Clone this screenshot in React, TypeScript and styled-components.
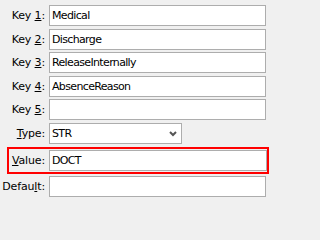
import React from "react";
import styled, { createGlobalStyle } from "styled-components";

const Global = createGlobalStyle`
  html, body { margin: 0; padding: 0; background: #f0f0f0; }
  body { font-family: Tahoma, "DejaVu Sans", sans-serif; font-size: 11px; color: #000; }
  * { box-sizing: border-box; }
`;

const Form = styled.div`
  width: 271px;
  height: 202px;
  padding: 5px 5px 0 0;
  display: flex;
  flex-direction: column;
  gap: 2.5px;
  font-family: Tahoma, "DejaVu Sans", sans-serif;
  font-size: 11px;
  letter-spacing: -0.65px;
`;

const Row = styled.div`
  display: grid;
  grid-template-columns: 45px 1fr;
  column-gap: 4px;
  align-items: center;
`;

const HighlightRow = styled(Row)`
  grid-template-columns: 36px 1fr;
  margin: 0.5px -3px 0 7px;
  border: 2px solid #ff0000;
  padding: 1px 0;
`;

const Label = styled.label`
  text-align: right;
  white-space: nowrap;
  color: #000;
  letter-spacing: -0.15px;
`;

const Key = styled.span`
  text-decoration: underline;
  text-underline-offset: 1px;
`;

const Field = styled.div<{ $width?: number }>`
  height: 21px;
  width: ${(p) => (p.$width ? `${p.$width}px` : "100%")};
  background: #fff;
  border: 1px solid #adadad;
  padding: 0 2px;
  display: flex;
  align-items: center;
  position: relative;
  white-space: nowrap;
  overflow: hidden;
`;

const Chevron = styled.svg`
  position: absolute;
  right: 4px;
  top: 7px;
`;

const label = (before: string, key: string, after: string) => (
  <>
    {before}
    <Key>{key}</Key>
    {after}
  </>
);

export default function App() {
  return (
    <>
      <Global />
      <Form>
        <Row>
          <Label>{label("Key ", "1", ":")}</Label>
          <Field>Medical</Field>
        </Row>
        <Row>
          <Label>{label("Key ", "2", ":")}</Label>
          <Field>Discharge</Field>
        </Row>
        <Row>
          <Label>{label("Key ", "3", ":")}</Label>
          <Field>ReleaseInternally</Field>
        </Row>
        <Row>
          <Label>{label("Key ", "4", ":")}</Label>
          <Field>AbsenceReason</Field>
        </Row>
        <Row>
          <Label>{label("Key ", "5", ":")}</Label>
          <Field />
        </Row>
        <Row>
          <Label>{label("", "T", "ype:")}</Label>
          <Field $width={133}>
            STR
            <Chevron width="8" height="6" viewBox="0 0 8 6">
              <path d="M1 1 L4 4 L7 1" fill="none" stroke="#555" strokeWidth="2" />
            </Chevron>
          </Field>
        </Row>
        <HighlightRow>
          <Label>{label("", "V", "alue:")}</Label>
          <Field>DOCT</Field>
        </HighlightRow>
        <Row>
          <Label>{label("Defau", "l", "t:")}</Label>
          <Field />
        </Row>
      </Form>
    </>
  );
}
